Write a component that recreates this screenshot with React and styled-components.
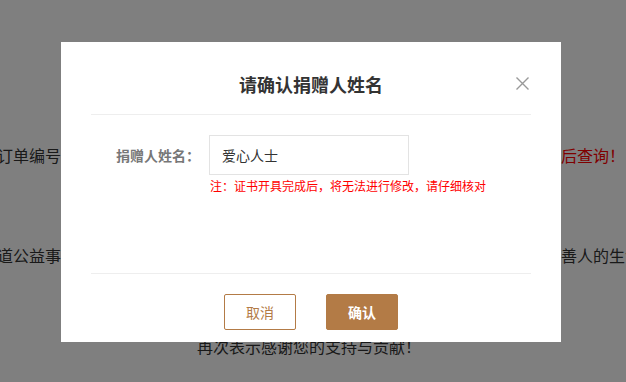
import React, { useState } from "react";
import styled, { createGlobalStyle } from "styled-components";

const GlobalStyle = createGlobalStyle`
  html, body {
    margin: 0;
    padding: 0;
    background: #fff;
    overflow: hidden;
  }
  body {
    font-family: "Noto Sans CJK SC", "Microsoft YaHei", sans-serif;
    color: #333;
  }
`;

const Page = styled.div`
  width: 626px;
  height: 382px;
  padding-top: 143px;
  box-sizing: border-box;
  font-size: 16px;
  line-height: 24px;
  overflow: hidden;
`;

const Line = styled.div`
  display: flex;
  justify-content: space-between;
  white-space: nowrap;
  margin: ${(p) => p.$margin || "0"};
`;

const Filler = styled.span`
  flex: 1;
  overflow: hidden;
  color: #333;
`;

const Part = styled.span`
  color: ${(p) => (p.$red ? "#ff0000" : "#333")};
`;

const Center = styled.p`
  margin: 67px 0 0;
  padding-right: 8px;
  text-align: center;
`;

const Overlay = styled.div`
  position: fixed;
  inset: 0;
  background: rgba(0, 0, 0, 0.5);
  display: flex;
  align-items: center;
  justify-content: center;
  padding: 2px 4px 0 0;
`;

const Modal = styled.div`
  position: relative;
  width: 500px;
  height: 300px;
  background: #fff;
  display: flex;
  flex-direction: column;
`;

const Header = styled.div`
  margin: 0 30px;
  padding: 30px 0 18px;
  border-bottom: 1px solid #eeeeee;
  text-align: center;
`;

const Title = styled.h3`
  margin: 0;
  font-size: 18px;
  line-height: 24px;
  font-weight: bold;
  color: #333;
`;

const Close = styled.button`
  position: absolute;
  top: 35px;
  right: 32px;
  width: 13px;
  height: 13px;
  padding: 0;
  border: 0;
  background: transparent;
  cursor: pointer;
  display: flex;
`;

const Body = styled.div`
  flex: 1;
  padding: 20px 0 0 55px;
`;

const FormRow = styled.div`
  display: flex;
  align-items: flex-start;
`;

const Label = styled.label`
  width: 93px;
  height: 40px;
  line-height: 40px;
  font-size: 14px;
  font-weight: 600;
  color: #777;
`;

const Field = styled.div`
  display: flex;
  flex-direction: column;
`;

const Input = styled.input`
  width: 200px;
  height: 40px;
  box-sizing: border-box;
  border: 1px solid #e3e3e3;
  padding: 0 12px;
  font-family: inherit;
  font-size: 14px;
  color: #333;
  outline: none;
`;

const Note = styled.p`
  margin: 3px 0 0 1px;
  font-size: 12px;
  line-height: 16px;
  color: #ff0000;
`;

const Footer = styled.div`
  margin: 0 30px;
  padding: 20px 0 12px;
  border-top: 1px solid #eeeeee;
  display: flex;
  justify-content: center;
  gap: 30px;
`;

const Button = styled.button`
  width: 72px;
  height: 36px;
  box-sizing: border-box;
  border-radius: 2px;
  border: 1px solid #b37b46;
  background: ${(p) => (p.$primary ? "#b37b46" : "#fff")};
  color: ${(p) => (p.$primary ? "#fff" : "#b37b46")};
  font-family: inherit;
  font-size: 14px;
  font-weight: ${(p) => (p.$primary ? "bold" : "normal")};
  cursor: pointer;
`;

const CloseIcon = () => (
  <svg width="13" height="13" viewBox="0 0 13 13">
    <path d="M0.5 0.5 L12.5 12.5 M12.5 0.5 L0.5 12.5" stroke="#999" strokeWidth="1.4" fill="none" />
  </svg>
);

export default function App() {
  const [name, setName] = useState("爱心人士");
  return (
    <>
      <GlobalStyle />
      <Page>
        <Line $margin="0 1px 0 -35px">
          <Part>您的订单编号</Part>
          <Filler>为本次捐赠的唯一凭证，证书生成需要一定时间，请您次日登录中心稍</Filler>
          <Part $red>后查询！</Part>
        </Line>
        <Line $margin="76px -15px 0 -19px">
          <Part>知道公益事</Part>
          <Filler>业离不开每一位爱心人士的参与，您的每份善举都将温暖守护每一位行</Filler>
          <Part>善人的生命</Part>
        </Line>
        <Center>再次表示感谢您的支持与贡献！</Center>
      </Page>
      <Overlay>
        <Modal>
          <Header>
            <Title>请确认捐赠人姓名</Title>
          </Header>
          <Close aria-label="关闭">
            <CloseIcon />
          </Close>
          <Body>
            <FormRow>
              <Label>捐赠人姓名：</Label>
              <Field>
                <Input value={name} onChange={(e) => setName(e.target.value)} />
                <Note>注：证书开具完成后，将无法进行修改，请仔细核对</Note>
              </Field>
            </FormRow>
          </Body>
          <Footer>
            <Button>取消</Button>
            <Button $primary>确认</Button>
          </Footer>
        </Modal>
      </Overlay>
    </>
  );
}
